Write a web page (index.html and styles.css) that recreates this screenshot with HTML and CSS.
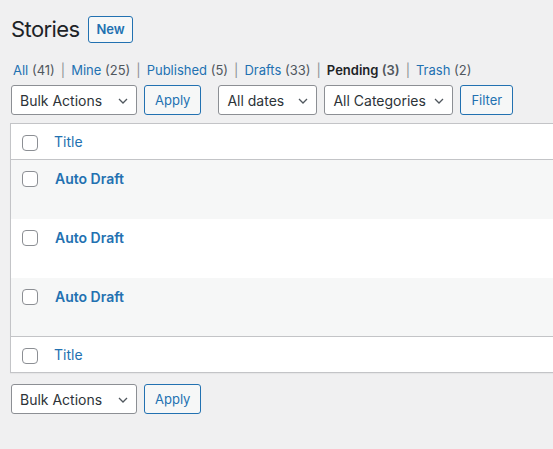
FILE: index.html
```html
<!DOCTYPE html>
<html lang="en">
<head>
  <meta charset="UTF-8">
  <title>Stories</title>
  <link rel="stylesheet" href="styles.css">
</head>
<body>
  <div class="wrap">
    <div class="page-head">
      <h1 class="page-title">Stories</h1>
      <a href="#" class="page-title-action">New</a>
    </div>

    <ul class="subsubsub">
      <li><a href="#">All <span class="count">(41)</span></a><span class="sep">|</span></li>
      <li><a href="#">Mine <span class="count">(25)</span></a><span class="sep">|</span></li>
      <li><a href="#">Published <span class="count">(5)</span></a><span class="sep">|</span></li>
      <li><a href="#">Drafts <span class="count">(33)</span></a><span class="sep">|</span></li>
      <li><a href="#" class="current">Pending <span class="count">(3)</span></a><span class="sep">|</span></li>
      <li><a href="#">Trash <span class="count">(2)</span></a></li>
    </ul>

    <div class="tablenav top">
      <div class="actions">
        <select class="select bulk"><option>Bulk Actions</option></select>
        <button class="button">Apply</button>
      </div>
      <div class="actions">
        <select class="select dates"><option>All dates</option></select>
        <select class="select cats"><option>All Categories</option></select>
        <button class="button">Filter</button>
      </div>
    </div>

    <table class="list-table">
      <thead>
        <tr>
          <td class="check-column"><span class="checkbox"></span></td>
          <th class="column-title"><a href="#">Title</a></th>
        </tr>
      </thead>
      <tbody>
        <tr>
          <td class="check-column"><span class="checkbox"></span></td>
          <td class="column-title"><a href="#" class="row-title">Auto Draft</a></td>
        </tr>
        <tr>
          <td class="check-column"><span class="checkbox"></span></td>
          <td class="column-title"><a href="#" class="row-title">Auto Draft</a></td>
        </tr>
        <tr>
          <td class="check-column"><span class="checkbox"></span></td>
          <td class="column-title"><a href="#" class="row-title">Auto Draft</a></td>
        </tr>
      </tbody>
      <tfoot>
        <tr>
          <td class="check-column"><span class="checkbox"></span></td>
          <th class="column-title"><a href="#">Title</a></th>
        </tr>
      </tfoot>
    </table>

    <div class="tablenav bottom">
      <div class="actions">
        <select class="select bulk"><option>Bulk Actions</option></select>
        <button class="button">Apply</button>
      </div>
    </div>
  </div>
</body>
</html>
```

FILE: styles.css
```css
/* admin list screen */
body {
  margin: 0;
  background: #f0f0f1;
  color: #1d2327;
  font-family: Inter, "Liberation Sans", sans-serif;
  font-size: 13px;
  overflow: hidden;
}
a {
  color: #2271b1;
  text-decoration: none;
}
.wrap {
  padding: 0 0 0 10px;
  width: 620px;
}

/* heading */
.page-head {
  display: flex;
  align-items: center;
  gap: 9px;
  padding: 15px 0 0 1px;
}
.page-title {
  margin: 0;
  font-size: 22px;
  font-weight: 400;
  line-height: 28px;
  letter-spacing: -0.6px;
}
.page-title-action {
  display: inline-block;
  padding: 3px 7px 4px;
  border: 1px solid #2271b1;
  border-radius: 3px;
  background: #f6f7f7;
  font-size: 13px;
  font-weight: 600;
  line-height: 18px;
}

/* status links */
.subsubsub {
  list-style: none;
  display: flex;
  margin: 0;
  padding: 17px 0 0 3px;
  line-height: 20px;
}
.subsubsub .sep {
  color: #8c8f94;
  padding: 0 6px;
}
.subsubsub .count {
  color: #50575e;
}
.subsubsub .current {
  color: #1d2327;
  font-weight: 600;
}

/* filter bars */
.tablenav {
  display: flex;
  gap: 17px;
  padding-left: 1px;
}
.tablenav.top {
  margin: 5px 0 8px;
}
.tablenav.bottom {
  margin-top: 11px;
}
.actions {
  display: flex;
  gap: 7px;
}
.select {
  appearance: none;
  height: 30px;
  padding: 0 24px 0 8px;
  border: 1px solid #8c8f94;
  border-radius: 3px;
  background: #fff url("data:image/svg+xml,%3Csvg xmlns='http://www.w3.org/2000/svg' width='20' height='20' viewBox='0 0 20 20'%3E%3Cpath d='M5 7.5l5 5 5-5' fill='none' stroke='%2350575e' stroke-width='1.6'/%3E%3C/svg%3E") no-repeat right 5px top 55%;
  background-size: 16px 16px;
  color: #2c3338;
  font-family: inherit;
  font-size: 14px;
}
.select.bulk { width: 126px; }
.select.dates { width: 99px; }
.select.cats { width: 129px; }
.button {
  height: 30px;
  padding: 0 10px;
  border: 1px solid #2271b1;
  border-radius: 3px;
  background: #f6f7f7;
  color: #2271b1;
  font-family: inherit;
  font-size: 13px;
}

/* table */
.list-table {
  width: 100%;
  border-collapse: collapse;
  background: #fff;
  border: 1px solid #c3c4c7;
  box-shadow: 0 1px 1px rgba(0, 0, 0, 0.04);
}
.list-table td,
.list-table th {
  text-align: left;
  vertical-align: top;
  padding: 0;
  font-weight: 400;
}
.list-table thead tr {
  height: 36px;
  border-bottom: 1px solid #c3c4c7;
}
.list-table tfoot tr {
  height: 36px;
  border-top: 1px solid #c3c4c7;
}
.list-table tbody tr {
  height: 59px;
}
.list-table tbody tr:nth-child(odd) {
  background: #f6f7f7;
}
.check-column {
  width: 32px;
  padding-left: 11px !important;
}
.checkbox {
  display: block;
  width: 14px;
  height: 14px;
  border: 1px solid #8c8f94;
  border-radius: 4px;
  background: #fff;
  margin-top: 11px;
}
thead .column-title,
tfoot .column-title {
  font-size: 14px;
  line-height: 20px;
  padding-top: 8px !important;
}
tbody .checkbox {
  margin-top: 11px;
}
tbody .column-title {
  padding-top: 9px !important;
  padding-left: 1px !important;
}
.row-title {
  font-size: 14px;
  font-weight: 600;
  line-height: 20px;
}
```
